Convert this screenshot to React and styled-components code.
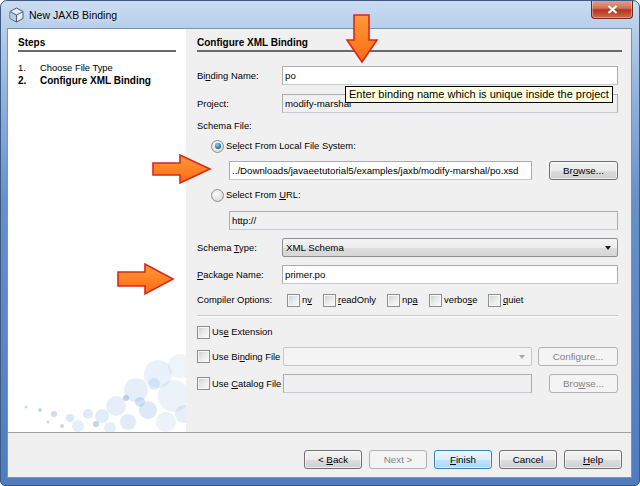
import React from "react";
import styled, { createGlobalStyle } from "styled-components";

const GlobalStyle = createGlobalStyle`
  html, body {
    margin: 0;
    padding: 0;
    background: #ffffff;
  }
  body {
    font-family: "Liberation Sans", Arial, sans-serif;
    font-size: 9.4px;
    color: #000000;
  }
  * {
    box-sizing: border-box;
  }
`;

const bubbles = [
  [150, 22, 14, 0.22], [172, 14, 12, 0.18], [128, 38, 12, 0.25], [166, 44, 16, 0.2],
  [108, 54, 10, 0.25], [140, 58, 9, 0.35], [94, 64, 7, 0.3], [80, 62, 5, 0.3],
  [120, 70, 8, 0.3], [62, 66, 4, 0.35], [46, 62, 3, 0.35], [32, 58, 2, 0.4],
  [18, 55, 1.5, 0.4], [70, 74, 6, 0.25], [102, 76, 6, 0.25], [158, 70, 10, 0.2],
  [176, 62, 9, 0.25], [132, 50, 5, 0.45], [118, 46, 3, 0.45], [88, 72, 3, 0.45],
  [146, 32, 6, 0.3], [54, 74, 2, 0.4], [40, 70, 1.5, 0.4],
];

function TitleIcon() {
  return (
    <svg width="15" height="16" viewBox="0 0 15 16">
      <path d="M7.5 1 L14 4.5 L14 11.5 L7.5 15 L1 11.5 L1 4.5 Z" fill="#e4ecf5" stroke="#4a5d75" />
      <path d="M1.5 5 L7.5 8.3 V14.3 L1.5 11.2Z" fill="#b9c9dc" />
      <path d="M1 4.5 L7.5 8 L14 4.5 M7.5 8 V15" fill="none" stroke="#4a5d75" />
    </svg>
  );
}

function Arrows() {
  return (
    <Overlay viewBox="0 0 640 486">
      <defs>
        <linearGradient id="org" x1="0" y1="0" x2="0" y2="1">
          <stop offset="0" stopColor="#ff9a3a" />
          <stop offset="1" stopColor="#ff6a12" />
        </linearGradient>
      </defs>
      <g fill="url(#org)" stroke="#d8281a" strokeWidth="1.6" strokeLinejoin="miter">
        <polygon points="354,15 369,15 369,40 377,40 362,62 347,40 354,40" />
        <polygon points="153,163 180,163 180,155 210,169 180,183 180,175 153,175" />
        <polygon points="118,272 145,272 145,264 173,279 145,294 145,286 118,286" />
      </g>
    </Overlay>
  );
}

function App() {
  return (
    <>
      <GlobalStyle />
      <Window>
        <TitleBar>
          <TitleIcon />
          <TitleText>New JAXB Binding</TitleText>
          <CloseButton>
            <svg width="11" height="9" viewBox="0 0 11 9">
              <path d="M1.5 1 L9.5 8 M9.5 1 L1.5 8" stroke="#ffffff" strokeWidth="2.2" />
            </svg>
          </CloseButton>
        </TitleBar>
        <Client>
          <Main>
            <StepsPanel>
              <Heading>Steps</Heading>
              <StepList>
                <Step>
                  <StepNum>1.</StepNum>
                  <span>Choose File Type</span>
                </Step>
                <Step $current>
                  <StepNum>2.</StepNum>
                  <span>Configure XML Binding</span>
                </Step>
              </StepList>
              <Bubbles viewBox="0 0 178 80">
                {bubbles.map(([cx, cy, r, o], i) => (
                  <circle key={i} cx={cx} cy={cy} r={r} fill={r < 4 ? "#6ea0d4" : "#9cc0e6"} opacity={o} />
                ))}
              </Bubbles>
            </StepsPanel>
            <ContentPanel>
              <Heading>Configure XML Binding</Heading>
              <Form>
                <Row $mt={14}>
                  <Label>Bi<Mn>n</Mn>ding Name:</Label>
                  <TextField readOnly value="po" />
                </Row>
                <Row $mt={9}>
                  <Label>Project:</Label>
                  <TextField readOnly $disabled value="modify-marshal" />
                </Row>
                <TextRow $mt={6}>
                  <span>Schema File:</span>
                </TextRow>
                <TextRow $mt={6} $indent={14}>
                  <Radio $checked />
                  <span>Se<Mn>l</Mn>ect From Local File System:</span>
                </TextRow>
                <Row $mt={8} $indent={32}>
                  <TextField readOnly value="../Downloads/javaeetutorial5/examples/jaxb/modify-marshal/po.xsd" />
                  <Button $w={69} $ml={17}>Br<Mn>o</Mn>wse...</Button>
                </Row>
                <TextRow $mt={8} $indent={14}>
                  <Radio />
                  <span>Select From <Mn>U</Mn>RL:</span>
                </TextRow>
                <Row $mt={9} $indent={32}>
                  <TextField readOnly $disabled value="http://" />
                </Row>
                <Row $mt={8}>
                  <Label>Schema <Mn>T</Mn>ype:</Label>
                  <Combo>
                    <span>XML Schema</span>
                    <ComboArrow />
                  </Combo>
                </Row>
                <Row $mt={8}>
                  <Label><Mn>P</Mn>ackage Name:</Label>
                  <TextField readOnly value="primer.po" />
                </Row>
                <TextRow $mt={9}>
                  <Label $w={90}>Compiler Options:</Label>
                  <Option $w={36}><Check /><span>n<Mn>v</Mn></span></Option>
                  <Option $w={64}><Check /><span><Mn>r</Mn>eadOnly</span></Option>
                  <Option $w={42}><Check /><span>np<Mn>a</Mn></span></Option>
                  <Option $w={59}><Check /><span>verbo<Mn>s</Mn>e</span></Option>
                  <Option><Check /><span><Mn>q</Mn>uiet</span></Option>
                </TextRow>
                <Separator />
                <TextRow $mt={8}>
                  <Check />
                  <span>Us<Mn>e</Mn> Extension</span>
                </TextRow>
                <Row $mt={8}>
                  <Check />
                  <CheckLabel>Use Bi<Mn>n</Mn>ding File</CheckLabel>
                  <Combo $disabled>
                    <span />
                    <ComboArrow $disabled />
                  </Combo>
                  <Button $w={80} $ml={6} disabled>Configure...</Button>
                </Row>
                <Row $mt={8}>
                  <Check />
                  <CheckLabel>Use <Mn>C</Mn>atalog File</CheckLabel>
                  <TextField readOnly $disabled value="" />
                  <Button $w={69} $ml={17} disabled>Bro<Mn>w</Mn>se...</Button>
                </Row>
              </Form>
            </ContentPanel>
          </Main>
          <ButtonBar>
            <Button>&lt; <Mn>B</Mn>ack</Button>
            <Button disabled>Next &gt;</Button>
            <Button $default><Mn>F</Mn>inish</Button>
            <Button>Cancel</Button>
            <Button><Mn>H</Mn>elp</Button>
          </ButtonBar>
        </Client>
        <Tooltip>Enter binding name which is unique inside the project</Tooltip>
        <Arrows />
      </Window>
    </>
  );
}

export default App;

const Window = styled.div`
  position: relative;
  width: 640px;
  height: 486px;
  display: flex;
  flex-direction: column;
  padding: 0 7px 7px 6px;
  border: 1px solid #3b5a84;
  border-radius: 7px 7px 5px 5px;
  overflow: hidden;
  background: linear-gradient(to bottom, #cadcf1 0px, #b7cee9 28px, #93b4de 90px, #6790c9 200px, #4e7cbf 100%);
`;

const TitleBar = styled.div`
  height: 27px;
  display: flex;
  align-items: center;
  padding-left: 2px;
  flex: none;
`;

const TitleText = styled.span`
  margin-left: 5px;
  font-family: "Liberation Sans", Arial, sans-serif;
  font-size: 10.5px;
  color: #000000;
  text-shadow: 0 0 6px rgba(255, 255, 255, 0.9);
`;

const CloseButton = styled.div`
  margin-left: auto;
  margin-right: -1px;
  align-self: flex-start;
  margin-top: -1px;
  width: 42px;
  height: 19px;
  display: flex;
  align-items: center;
  justify-content: center;
  border: 1px solid #6b2a1f;
  border-top: none;
  border-radius: 0 0 4px 4px;
  background: linear-gradient(to bottom, #e6a598 0%, #d0705c 45%, #b8331c 55%, #cf6a4f 100%);
  box-shadow: inset 0 0 0 1px rgba(255, 255, 255, 0.35);
`;

const Client = styled.div`
  flex: 1;
  display: flex;
  flex-direction: column;
  border: 1px solid #7b93b6;
  background: #f0f0f0;
  min-height: 0;
`;

const Main = styled.div`
  flex: 1;
  display: flex;
  min-height: 0;
`;

const StepsPanel = styled.div`
  width: 178px;
  flex: none;
  display: flex;
  flex-direction: column;
  padding: 7px 10px 0 10px;
  background: #ffffff;
`;

const ContentPanel = styled.div`
  flex: 1;
  display: flex;
  flex-direction: column;
  padding: 7px 9px 0 11px;
`;

const Heading = styled.div`
  font-weight: bold;
  font-size: 10px;
  line-height: 14px;
  height: 16px;
  border-bottom: 2px solid #6a6a6a;
`;

const StepList = styled.div`
  margin-top: 10px;
  line-height: 12.5px;
`;

const Step = styled.div`
  display: flex;
  font-weight: ${(p) => (p.$current ? "bold" : "normal")};
  font-size: ${(p) => (p.$current ? "10px" : "9.4px")};
`;

const StepNum = styled.span`
  width: 22px;
  flex: none;
`;

const Bubbles = styled.svg`
  display: block;
  margin: auto -10px 0 -10px;
  width: 178px;
  height: 80px;
`;

const Form = styled.div`
  display: flex;
  flex-direction: column;
  padding-right: 4px;
`;

const Row = styled.div`
  display: flex;
  align-items: center;
  height: 19px;
  margin-top: ${(p) => p.$mt || 0}px;
  padding-left: ${(p) => p.$indent || 0}px;
`;

const TextRow = styled(Row)`
  height: 14px;
  line-height: 14px;
  white-space: nowrap;
`;

const Label = styled.span`
  width: ${(p) => p.$w || 85}px;
  flex: none;
  white-space: nowrap;
`;

const Mn = styled.span`
  text-decoration: underline;
`;

const TextField = styled.input`
  flex: 1;
  min-width: 0;
  height: 19px;
  margin: 0;
  padding: 0 2px;
  border: 1px solid #abadb3;
  border-bottom-color: #c6cbd1;
  background: ${(p) => (p.$disabled ? "#f0f0f0" : "#ffffff")};
  font-family: "Liberation Sans", Arial, sans-serif;
  font-size: 9.7px;
  color: #000000;
  outline: none;
`;

const Combo = styled.div`
  flex: 1;
  height: 19px;
  display: flex;
  align-items: center;
  justify-content: space-between;
  padding: 0 6px 0 3px;
  font-size: 9.7px;
  border: 1px solid ${(p) => (p.$disabled ? "#c4c7ca" : "#8e8f8f")};
  border-radius: 2px;
  background: ${(p) =>
    p.$disabled
      ? "#f4f4f4"
      : "linear-gradient(to bottom, #f4f4f4 0%, #ececec 50%, #dedede 51%, #d6d6d6 100%)"};
`;

const ComboArrow = styled.span`
  width: 0;
  height: 0;
  border-left: 3.5px solid transparent;
  border-right: 3.5px solid transparent;
  border-top: 4px solid ${(p) => (p.$disabled ? "#a8a8a8" : "#1a1a1a")};
`;

const Radio = styled.span`
  position: relative;
  width: 13px;
  height: 13px;
  flex: none;
  margin-right: 2px;
  border-radius: 50%;
  border: 1px solid #8e8f8f;
  background: radial-gradient(circle at 40% 35%, #fafafa 0%, #e2e2e2 60%, #cfcfcf 100%);
  &::after {
    content: "";
    display: ${(p) => (p.$checked ? "block" : "none")};
    position: absolute;
    left: 2.5px;
    top: 2.5px;
    width: 6px;
    height: 6px;
    border-radius: 50%;
    background: radial-gradient(circle at 40% 35%, #9ad2f2 0%, #2a79b2 55%, #0d4a7c 100%);
  }
`;

const Check = styled.span`
  width: 13px;
  height: 13px;
  flex: none;
  margin-right: 2px;
  border: 1px solid #8e8f8f;
  background: linear-gradient(135deg, #cbcfd4 0%, #eeeeee 60%, #fafafa 100%);
  box-shadow: inset 0 0 0 1px #f6f6f6;
`;

const CheckLabel = styled.span`
  width: 71px;
  flex: none;
  white-space: nowrap;
`;

const Option = styled.span`
  display: flex;
  align-items: center;
  width: ${(p) => (p.$w ? `${p.$w}px` : "auto")};
  flex: none;
`;

const Separator = styled.div`
  margin-top: 8px;
  height: 2px;
  border-top: 1px solid #c8c8c8;
  border-bottom: 1px solid #ffffff;
`;

const Button = styled.button`
  width: ${(p) => p.$w || 58}px;
  height: 19px;
  flex: none;
  margin: 0 0 0 ${(p) => p.$ml || 0}px;
  padding: 0;
  font-family: "Liberation Sans", Arial, sans-serif;
  font-size: 9.8px;
  border-radius: 3px;
  border: 1px solid ${(p) => (p.$default ? "#3c7fb1" : "#707070")};
  color: #000000;
  background: ${(p) =>
    p.$default
      ? "linear-gradient(to bottom, #eaf6fd 0%, #d9f0fc 50%, #bee6fd 51%, #a7d9f5 100%)"
      : "linear-gradient(to bottom, #f2f2f2 0%, #ebebeb 50%, #dddddd 51%, #cfcfcf 100%)"};
  box-shadow: inset 0 0 0 1px rgba(255, 255, 255, 0.6);
  &:disabled {
    border-color: #adb2b5;
    background: #f4f4f4;
    color: #838383;
    box-shadow: none;
  }
`;

const ButtonBar = styled.div`
  height: 45px;
  flex: none;
  display: flex;
  justify-content: flex-end;
  gap: 7px;
  padding: 17px 9px 0 0;
  border-top: 1px solid #a0a0a0;
`;

const Tooltip = styled.div`
  position: absolute;
  left: 344px;
  top: 85px;
  height: 17px;
  padding: 0 3px;
  line-height: 15px;
  white-space: nowrap;
  border: 1px solid #000000;
  background: #ffffe1;
  font-size: 11px;
`;

const Overlay = styled.svg`
  position: absolute;
  left: -1px;
  top: -1px;
  width: 640px;
  height: 486px;
  pointer-events: none;
`;
